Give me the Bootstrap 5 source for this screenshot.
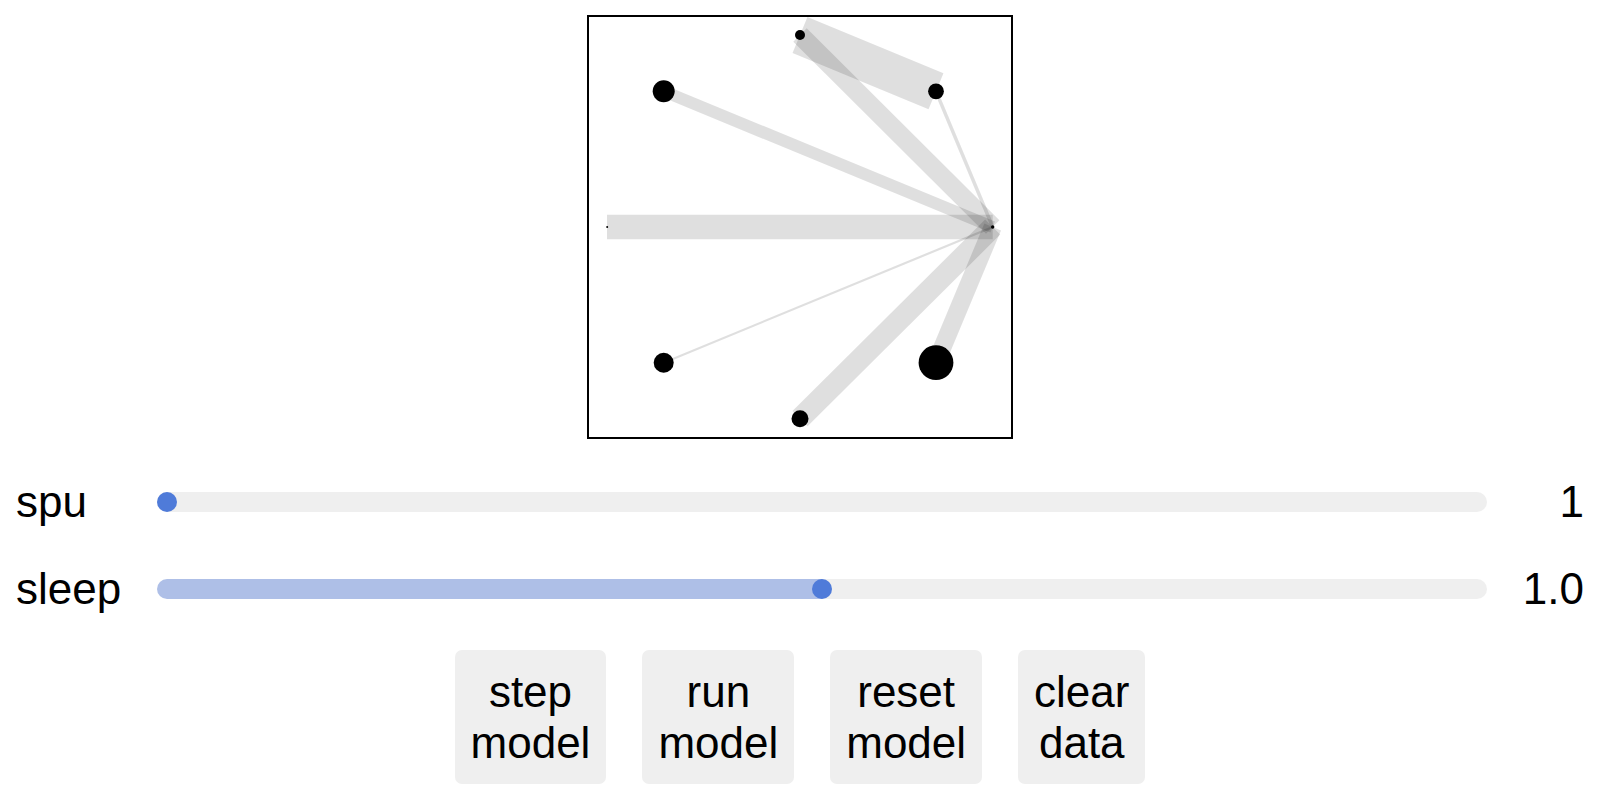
<!DOCTYPE html>
<html lang="en">
<head>
<meta charset="utf-8">
<meta name="viewport" content="width=device-width, initial-scale=1">
<title>Model</title>
<link href="https://cdn.jsdelivr.net/npm/bootstrap@5.3.0/dist/css/bootstrap.min.css" rel="stylesheet">
<style>
  body { font-family: "Liberation Sans", Arial, sans-serif; font-size: 44px; line-height: 51px; color: #000; background: #fff; }
  .model-app { gap: 36px; padding: 15px 16px 16px; }
  .network { width: 426px; max-width: 100%; height: auto; }
  .controls { display: grid; grid-template-columns: auto 1fr auto; gap: 36px; align-items: center; }
  .slider { appearance: none; -webkit-appearance: none; display: block; width: 100%; height: 20px; margin: 0; border-radius: 10px;
    background: linear-gradient(to right, #aebfe7 var(--fill), #efefef var(--fill)); }
  .slider::-webkit-slider-thumb { -webkit-appearance: none; width: 20px; height: 20px; border: 0; border-radius: 50%; background: #4f7bd9; }
  .slider::-moz-range-thumb { width: 20px; height: 20px; border: 0; border-radius: 50%; background: #4f7bd9; }
  .actions { gap: 36px; }
  .actions .btn { --bs-btn-font-size: 44px; --bs-btn-line-height: 51px; --bs-btn-padding-x: 16px; --bs-btn-padding-y: 16px;
    --bs-btn-border-width: 0; --bs-btn-border-radius: 7px; --bs-btn-bg: #efefef; --bs-btn-color: #000;
    --bs-btn-hover-bg: #e4e4e4; --bs-btn-hover-color: #000; --bs-btn-active-bg: #d8d8d8; --bs-btn-active-color: #000; }
</style>
</head>
<body>
<main class="model-app d-flex flex-column">
  <svg class="network align-self-center" viewBox="0 0 426 425" role="img" aria-label="Network of agents">
    <rect x="1" y="1" width="424" height="422" fill="none" stroke="#000" stroke-width="2"/>
    <g stroke="#000" stroke-opacity=".125">
      <line x1="213" y1="20" x2="349" y2="76.3" stroke-width="39"/>
      <line x1="213" y1="20" x2="405.7" y2="212" stroke-width="19"/>
      <line x1="349" y1="76.3" x2="405.7" y2="212" stroke-width="3.5"/>
      <line x1="76.7" y1="76.3" x2="405.7" y2="212" stroke-width="12"/>
      <line x1="20" y1="212" x2="405.7" y2="212" stroke-width="24.7"/>
      <line x1="76.7" y1="347.7" x2="405.7" y2="212" stroke-width="2.2"/>
      <line x1="213" y1="403.7" x2="405.7" y2="212" stroke-width="21.4"/>
      <line x1="349" y1="347.7" x2="405.7" y2="212" stroke-width="18"/>
    </g>
    <g fill="#000">
      <circle cx="405.7" cy="212" r="1.7"/>
      <circle cx="349" cy="76.3" r="7.9"/>
      <circle cx="213" cy="20" r="5"/>
      <circle cx="76.7" cy="76.3" r="11"/>
      <circle cx="20.2" cy="212" r="1"/>
      <circle cx="76.7" cy="347.7" r="10"/>
      <circle cx="213" cy="403.7" r="8.5"/>
      <circle cx="349" cy="347.7" r="17.4"/>
    </g>
  </svg>
  <div class="controls">
    <label for="spu">spu</label>
    <input class="slider" type="range" id="spu" min="1" max="50" value="1" style="--fill: 0%">
    <output class="text-end p-0" for="spu">1</output>
    <label for="sleep">sleep</label>
    <input class="slider" type="range" id="sleep" min="0" max="2" step="0.1" value="1" style="--fill: 50%">
    <output class="text-end p-0" for="sleep">1.0</output>
  </div>
  <div class="actions d-flex flex-wrap justify-content-center">
    <button type="button" class="btn">step<br>model</button>
    <button type="button" class="btn">run<br>model</button>
    <button type="button" class="btn">reset<br>model</button>
    <button type="button" class="btn">clear<br>data</button>
  </div>
</main>
<script src="https://cdn.jsdelivr.net/npm/bootstrap@5.3.0/dist/js/bootstrap.bundle.min.js"></script>
<script>
  document.querySelectorAll('.slider').forEach(function (s) {
    s.addEventListener('input', function () {
      s.style.setProperty('--fill', (s.value - s.min) / (s.max - s.min) * 100 + '%');
      document.querySelector('output[for="' + s.id + '"]').textContent = s.id === 'sleep' ? Number(s.value).toFixed(1) : s.value;
    });
  });
</script>
</body>
</html>
